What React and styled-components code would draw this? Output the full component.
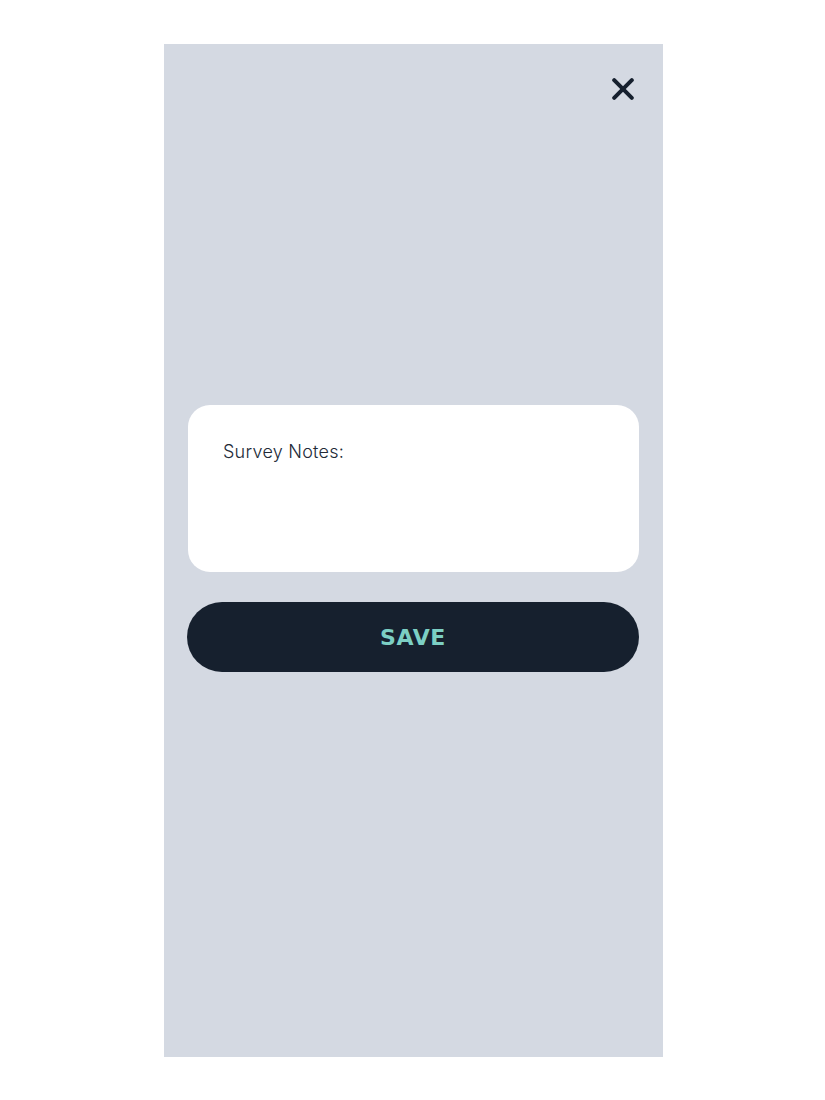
import { createGlobalStyle, styled } from 'styled-components';

const GlobalStyle = createGlobalStyle`
  html, body {
    margin: 0;
    padding: 0;
    background: #ffffff;
  }
  body {
    font-family: Inter, "Liberation Sans", sans-serif;
  }
`;

const CloseIcon = () => (
  <svg width="22" height="22" viewBox="0 0 22 22" fill="none">
    <path d="M2.2 2.2L19.8 19.8M19.8 2.2L2.2 19.8" stroke="#16202e" strokeWidth="4" strokeLinecap="round" />
  </svg>
);

const App = () => {
  return (
    <>
      <GlobalStyle />
      <S.Page>
        <S.Panel>
          <S.Header>
            <S.CloseButton aria-label="Close">
              <CloseIcon />
            </S.CloseButton>
          </S.Header>
          <S.Body>
            <S.NotesCard>
              <S.NotesLabel>Survey Notes:</S.NotesLabel>
            </S.NotesCard>
            <S.SaveButton>SAVE</S.SaveButton>
          </S.Body>
        </S.Panel>
      </S.Page>
    </>
  );
};

const S = {
  Page: styled.div`
    display: flex;
    padding: 44px 0 43px 164px;
  `,
  Panel: styled.div`
    width: 499px;
    height: 1013px;
    background-color: #d4d9e2;
    display: flex;
    flex-direction: column;
    box-sizing: border-box;
  `,
  Header: styled.div`
    display: flex;
    justify-content: flex-end;
    padding: 34px 29px 0 0;
  `,
  CloseButton: styled.button`
    display: flex;
    width: 22px;
    height: 22px;
    padding: 0;
    border: none;
    background: none;
    cursor: pointer;
  `,
  Body: styled.div`
    display: flex;
    flex-direction: column;
    gap: 30px;
    padding: 305px 24px 0 23px;
  `,
  NotesCard: styled.div`
    height: 167px;
    margin-left: 1px;
    background-color: #ffffff;
    border-radius: 22px;
    padding: 36px 35px;
    box-sizing: border-box;
  `,
  NotesLabel: styled.div`
    font-family: Inter, "Liberation Sans", sans-serif;
    font-size: 18px;
    font-weight: 300;
    color: #222a37;
    letter-spacing: 0.25px;
  `,
  SaveButton: styled.button`
    height: 70px;
    border: none;
    border-radius: 35px;
    background-color: #16202e;
    color: #7ccfc4;
    font-family: "DejaVu Sans", "Liberation Sans", sans-serif;
    font-weight: 700;
    font-size: 22px;
    letter-spacing: 0.6px;
    cursor: pointer;
  `,
};

export default App;
